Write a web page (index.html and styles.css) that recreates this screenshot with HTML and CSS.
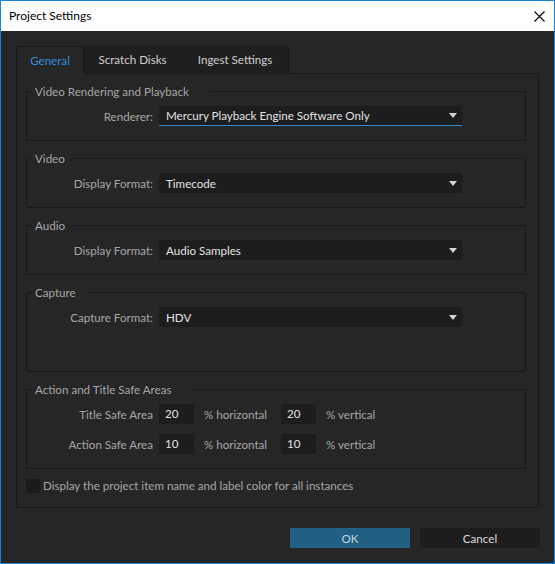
FILE: index.html
```html
<!DOCTYPE html>
<html>
<head>
<meta charset="utf-8">
<title>Project Settings</title>
<link rel="stylesheet" href="styles.css">
</head>
<body>
<div class="window">
  <div class="titlebar">
    <span class="title">Project Settings</span>
    <svg class="close" width="11" height="11" viewBox="0 0 11 11"><path d="M0.5 0.5L10.5 10.5M10.5 0.5L0.5 10.5" stroke="#000" stroke-width="1.1" fill="none"/></svg>
  </div>
  <div class="client">
    <div class="panel">
      <div class="tabs">
        <div class="tab tab-general active">General</div>
        <div class="tab tab-scratch">Scratch Disks</div>
        <div class="tab tab-ingest">Ingest Settings</div>
        <div class="tab-fill"></div>
      </div>
      <div class="panel-body">
        <fieldset class="group">
          <legend class="legend long">Video Rendering and Playback</legend>
          <div class="row">
            <span class="label">Renderer:</span>
            <div class="select focused"><span>Mercury Playback Engine Software Only</span><span class="arrow"></span></div>
          </div>
        </fieldset>
        <fieldset class="group">
          <legend class="legend">Video</legend>
          <div class="row">
            <span class="label">Display Format:</span>
            <div class="select"><span>Timecode</span><span class="arrow"></span></div>
          </div>
        </fieldset>
        <fieldset class="group">
          <legend class="legend">Audio</legend>
          <div class="row">
            <span class="label">Display Format:</span>
            <div class="select"><span>Audio Samples</span><span class="arrow"></span></div>
          </div>
        </fieldset>
        <fieldset class="group tall">
          <legend class="legend mid">Capture</legend>
          <div class="row">
            <span class="label">Capture Format:</span>
            <div class="select"><span>HDV</span><span class="arrow"></span></div>
          </div>
        </fieldset>
        <fieldset class="group">
          <legend class="legend long">Action and Title Safe Areas</legend>
          <div class="row">
            <span class="label">Title Safe Area</span>
            <div class="input">20</div>
            <span class="unit">% horizontal</span>
            <div class="input">20</div>
            <span class="unit">% vertical</span>
          </div>
          <div class="row row-next">
            <span class="label">Action Safe Area</span>
            <div class="input">10</div>
            <span class="unit">% horizontal</span>
            <div class="input">10</div>
            <span class="unit">% vertical</span>
          </div>
        </fieldset>
        <div class="check-row">
          <span class="checkbox"></span>
          <span class="check-label">Display the project item name and label color for all instances</span>
        </div>
      </div>
    </div>
    <div class="buttons">
      <button class="btn primary">OK</button>
      <button class="btn">Cancel</button>
    </div>
  </div>
</div>
</body>
</html>
```

FILE: styles.css
```css
* { box-sizing: border-box; }

html, body {
  margin: 0;
  padding: 0;
  background: #262626;
}

body {
  font-family: "Lato", "Liberation Sans", sans-serif;
  font-size: 11.6px;
}

.window {
  width: 555px;
  height: 564px;
  border: 1px solid #1883d7;
  display: flex;
  flex-direction: column;
  background: #262626;
}

.titlebar {
  height: 30px;
  flex: none;
  background: #ffffff;
  display: flex;
  align-items: center;
  justify-content: space-between;
  padding: 0 9px 0 8px;
}

.title {
  color: #000;
  font-size: 12px;
  line-height: 16px;
}

.close {
  display: block;
}

.client {
  flex: 1;
  background: #262626;
  padding: 15px 14px 0 15px;
}

.panel {
  width: 523px;
}

.tabs {
  display: flex;
  height: 28px;
}

.tab {
  height: 28px;
  line-height: 28px;
  text-align: center;
  color: #cfcfcf;
  background: #1f1f1f;
  border-right: 1px solid #1a1a1a;
  border-bottom: 1px solid #1a1a1a;
}

.tab.active {
  color: #2f8ddd;
  background: #262626;
  border: 1px solid #1a1a1a;
  border-bottom: none;
  line-height: 27px;
}

.tab-general { width: 68px; }
.tab-scratch { width: 98px; }
.tab-ingest { width: 107px; }

.tab-fill {
  flex: 1;
  border-bottom: 1px solid #1a1a1a;
}

.panel-body {
  border: 1px solid #1a1a1a;
  border-top: none;
  padding: 10px 12px 14px 9px;
}

.group {
  margin: 10px 0 0 0;
  padding: 7px 0 14px 0;
  border: 1px solid #1a1a1a;
  min-width: 0;
}

.group:first-child {
  margin-top: 0;
}

.group.tall {
  padding-bottom: 44px;
}

.legend {
  margin-left: 5px;
  padding: 0 7px 0 3px;
  line-height: 15px;
  color: #a6a6a6;
}

.legend.mid { padding-right: 11px; }
.legend.long { padding-right: 21px; }

.row {
  display: flex;
  align-items: center;
  height: 20px;
}

.row-next {
  margin-top: 10px;
}

.label {
  width: 126px;
  margin-right: 6px;
  text-align: right;
  color: #a6a6a6;
  flex: none;
}

.select {
  width: 303px;
  height: 20px;
  background: #1d1d1d;
  color: #e2e2e2;
  display: flex;
  align-items: center;
  justify-content: space-between;
  padding: 0 5px 0 7px;
}

.select.focused {
  border-bottom: 1px solid #2e8bd0;
}

.arrow {
  width: 0;
  height: 0;
  border-left: 4.5px solid transparent;
  border-right: 4.5px solid transparent;
  border-top: 5px solid #d4d4d4;
}

.input {
  width: 35px;
  height: 20px;
  line-height: 20px;
  background: #1d1d1d;
  color: #e2e2e2;
  padding-left: 6px;
  flex: none;
}

.unit {
  width: 67px;
  margin: 0 10px;
  color: #a6a6a6;
  flex: none;
}

.check-row {
  display: flex;
  align-items: center;
  height: 14px;
  margin-top: 10px;
}

.checkbox {
  width: 14px;
  height: 14px;
  background: #1b1b1b;
  margin-right: 3px;
  flex: none;
}

.check-label {
  color: #a6a6a6;
  line-height: 14px;
}

.buttons {
  display: flex;
  justify-content: flex-end;
  gap: 10px;
  margin-top: 20px;
}

.btn {
  width: 120px;
  height: 20px;
  border: none;
  padding: 0;
  font-family: inherit;
  font-size: 11.6px;
  color: #dcdcdc;
  background: #1d1d1d;
}

.btn.primary {
  background: #206082;
  color: #c6d6df;
}
```
